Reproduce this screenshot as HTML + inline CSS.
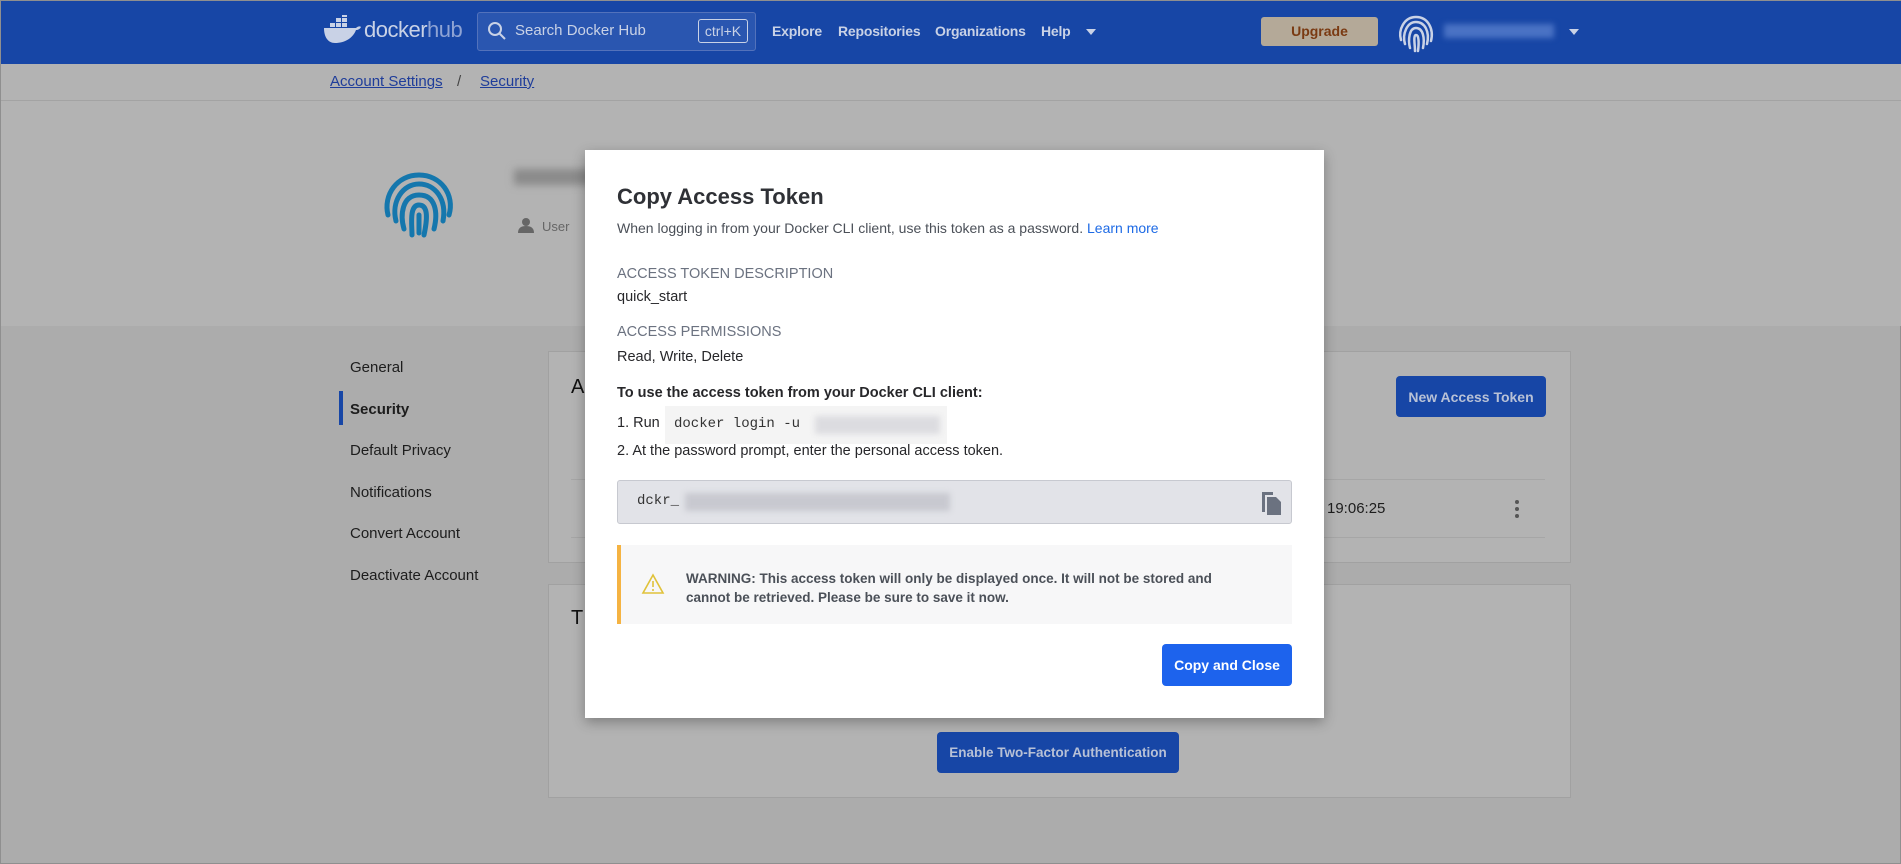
<!DOCTYPE html>
<html><head><meta charset="utf-8"><style>
*{box-sizing:border-box;margin:0;padding:0}
body{width:1901px;height:864px;overflow:hidden;background:#acacac;font-family:"Liberation Sans",sans-serif;position:relative;border:1px solid #8f8f8f}
.a{position:absolute}
.nav{left:0;top:0;width:1901px;height:63px;background:#1746a6}
.navt{color:#c9d2e6;font-size:14px;font-weight:bold;top:22px;letter-spacing:-0.2px}
.top{left:0;top:63px;width:1901px;height:262px;background:#b3b3b3}
.bc{top:72px;font-size:15px;color:#1f3d9a;text-decoration:underline}
.side{left:349px;font-size:15px;color:#1d1d1d}
.card{background:#b3b3b3;border:1px solid #a1a1a1}
.btn{background:#1746a6;color:#b8c1d6;font-size:14px;font-weight:bold;border-radius:4px;display:flex;align-items:center;justify-content:center}
.modal{left:584px;top:149px;width:739px;height:568px;background:#fff;box-shadow:0 4px 12px rgba(0,0,0,.3)}
.m{position:absolute;left:32px;font-size:14.5px;color:#27272a}
.lbl{color:#6b7280;font-size:14.5px}
.blur{background:#d8d8de;filter:blur(3px);position:absolute}
</style></head><body>
<div class="a nav"></div>
<svg class="a" style="left:321px;top:14px" width="40" height="30" viewBox="0 0 40 30"><g fill="#c9d2e6"><rect x="8" y="8" width="5" height="4"/><rect x="14" y="8" width="5" height="4"/><rect x="20" y="8" width="5" height="4"/><rect x="14" y="3" width="5" height="4"/><rect x="20" y="3" width="5" height="4"/><rect x="20" y="-2" width="5" height="4"/><path d="M2 13h32c2-2 4-2 5-1-1 2-3 3-5 3-3 8-11 13-21 13C6 28 2 22 2 13z"/></g></svg>
<div class="a" style="left:363px;top:16px;font-size:22px;color:#c9d2e6;letter-spacing:-0.5px">docker<span style="color:#8ea3d4">hub</span></div>
<div class="a" style="left:476px;top:11px;width:279px;height:39px;border:1px solid #5372bb;border-radius:3px;background:#2a56b0"></div>
<svg class="a" style="left:486px;top:20px" width="20" height="20" viewBox="0 0 20 20"><circle cx="8" cy="8" r="6" fill="none" stroke="#c9d2e6" stroke-width="2"/><path d="M12 12l6 6" stroke="#c9d2e6" stroke-width="2"/></svg>
<div class="a" style="left:514px;top:21px;font-size:15px;color:#c9d2e6">Search Docker Hub</div>
<div class="a" style="left:697px;top:18px;width:50px;height:24px;border:1px solid #c9d2e6;border-radius:3px;color:#c9d2e6;font-size:14px;text-align:center;line-height:22px">ctrl+K</div>
<div class="a navt" style="left:771px">Explore</div>
<div class="a navt" style="left:837px">Repositories</div>
<div class="a navt" style="left:934px">Organizations</div>
<div class="a navt" style="left:1040px">Help</div>
<div class="a" style="left:1085px;top:28px;border:5px solid transparent;border-top:6px solid #c9d2e6"></div>
<div class="a" style="left:1260px;top:16px;width:117px;height:29px;background:#b4a998;border-radius:3px;color:#7a3a12;font-size:14px;font-weight:bold;text-align:center;line-height:29px">Upgrade</div>
<svg class="a" style="left:1394px;top:11px" width="42" height="42" viewBox="0 0 42 42" fill="none" stroke="#c9d2e6" stroke-width="2.5" stroke-linecap="round"><path d="M6 28C3 18 9 5 21 5s18 12 15 24"/><path d="M10 32C7 22 12 10 21 10s14 10 11 22"/><path d="M15 36c-2-8-1-20 6-20s9 10 7 20"/><path d="M20 39c0-6-2-16 1-16s3 8 2 16"/></svg>
<div class="a" style="left:1443px;top:23px;width:110px;height:14px;background:#4a72c4;filter:blur(3px)"></div>
<div class="a" style="left:1568px;top:28px;border:5px solid transparent;border-top:6px solid #c9d2e6"></div>

<div class="a top"></div>
<div class="a bc" style="left:329px">Account Settings</div>
<div class="a" style="left:456px;top:72px;font-size:15px;color:#444">/</div>
<div class="a bc" style="left:479px">Security</div>
<div class="a" style="left:0;top:99px;width:1901px;height:1px;background:#a3a3a3"></div>

<svg class="a" style="left:380px;top:168px" width="76" height="76" viewBox="0 0 76 76" fill="none" stroke="#1577ad" stroke-width="5" stroke-linecap="round"><path d="M7 46C2 26 16 6 38 6s36 20 30 40"/><path d="M15 52C10 32 22 15 38 15s28 15 24 37"/><path d="M23 60c-4-14-2-34 15-34s19 18 15 34"/><path d="M31 66c0-10-3-30 7-30s8 16 5 30"/><path d="M38 46v18"/></svg>
<div class="a" style="left:513px;top:168px;width:80px;height:16px;background:#8a8a8a;filter:blur(4px)"></div>
<svg class="a" style="left:517px;top:216px" width="16" height="16" viewBox="0 0 16 16" fill="#666"><circle cx="8" cy="5" r="4"/><path d="M0 16c0-5 3-7 8-7s8 2 8 7z"/></svg>
<div class="a" style="left:541px;top:218px;font-size:13px;color:#666">User</div>

<div class="a side" style="top:358px">General</div>
<div class="a" style="left:338px;top:390px;width:4px;height:34px;background:#1746a6"></div>
<div class="a side" style="top:400px;font-weight:600">Security</div>
<div class="a side" style="top:441px">Default Privacy</div>
<div class="a side" style="top:483px">Notifications</div>
<div class="a side" style="top:524px">Convert Account</div>
<div class="a side" style="top:566px">Deactivate Account</div>

<div class="a card" style="left:547px;top:350px;width:1023px;height:212px"></div>
<div class="a" style="left:570px;top:375px;font-size:20px;color:#111">A</div>
<div class="a btn" style="left:1395px;top:375px;width:150px;height:41px">New Access Token</div>
<div class="a" style="left:570px;top:478px;width:974px;height:1px;background:#a6a6a6"></div>
<div class="a" style="left:570px;top:536px;width:974px;height:1px;background:#a6a6a6"></div>
<div class="a" style="left:1326px;top:499px;font-size:15px;color:#1d1d1d">19:06:25</div>
<svg class="a" style="left:1512px;top:498px" width="8" height="20"><circle cx="4" cy="3" r="2" fill="#555"/><circle cx="4" cy="10" r="2" fill="#555"/><circle cx="4" cy="17" r="2" fill="#555"/></svg>
<div class="a card" style="left:547px;top:583px;width:1023px;height:214px"></div>
<div class="a" style="left:570px;top:606px;font-size:20px;color:#111">T</div>
<div class="a btn" style="left:936px;top:731px;width:242px;height:41px;font-size:13.5px">Enable Two-Factor Authentication</div>

<div class="a modal">
<div class="m" style="top:34px;font-size:22px;font-weight:bold;color:#2f3136">Copy Access Token</div>
<div class="m" style="top:70px;font-size:14px;color:#4b5058">When logging in from your Docker CLI client, use this token as a password. <span style="color:#1d6ae5">Learn more</span></div>
<div class="m lbl" style="top:116px">ACCESS TOKEN DESCRIPTION</div>
<div class="m" style="top:139px">quick_start</div>
<div class="m lbl" style="top:174px">ACCESS PERMISSIONS</div>
<div class="m" style="top:199px">Read, Write, Delete</div>
<div class="m" style="top:235px;font-weight:bold">To use the access token from your Docker CLI client:</div>
<div class="m" style="top:265px">1. Run</div>
<div class="a" style="left:80px;top:256px;width:282px;height:38px;background:#f4f4f4"></div>
<div class="a" style="left:89px;top:266px;font-family:'Liberation Mono',monospace;font-size:14px;color:#333">docker login -u</div>
<div class="blur" style="left:230px;top:266px;width:125px;height:18px;background:#dcdce0"></div>
<div class="m" style="top:293px">2. At the password prompt, enter the personal access token.</div>
<div class="a" style="left:32px;top:330px;width:675px;height:44px;background:#e2e3e8;border:1px solid #c7c9d0;border-radius:3px"></div>
<div class="a" style="left:52px;top:343px;font-family:'Liberation Mono',monospace;font-size:14px;color:#333">dckr_</div>
<div class="blur" style="left:100px;top:343px;width:265px;height:18px;background:#c8c9d0"></div>
<svg class="a" style="left:675px;top:340px" width="22" height="26" viewBox="0 0 22 26"><path d="M2 2h11v3H5v17H2z" fill="#6b7280"/><path d="M7 7h9l5 5v13H7z" fill="#6b7280"/></svg>
<div class="a" style="left:32px;top:395px;width:675px;height:79px;background:#f7f7f8;border-left:4px solid #f5b342"></div>
<svg class="a" style="left:56px;top:423px" width="24" height="22" viewBox="0 0 24 22"><path d="M12 2L22 20H2z" fill="none" stroke="#e0c23a" stroke-width="1.6"/><path d="M12 8v6M12 16v2" stroke="#e0c23a" stroke-width="1.6"/></svg>
<div class="a" style="left:101px;top:419px;font-size:13.5px;font-weight:bold;color:#4b5058;line-height:19px;width:560px">WARNING: This access token will only be displayed once. It will not be stored and cannot be retrieved. Please be sure to save it now.</div>
<div class="a btn" style="left:577px;top:494px;width:130px;height:42px;background:#1d63ed;color:#fff">Copy and Close</div>
</div>
</body></html>
